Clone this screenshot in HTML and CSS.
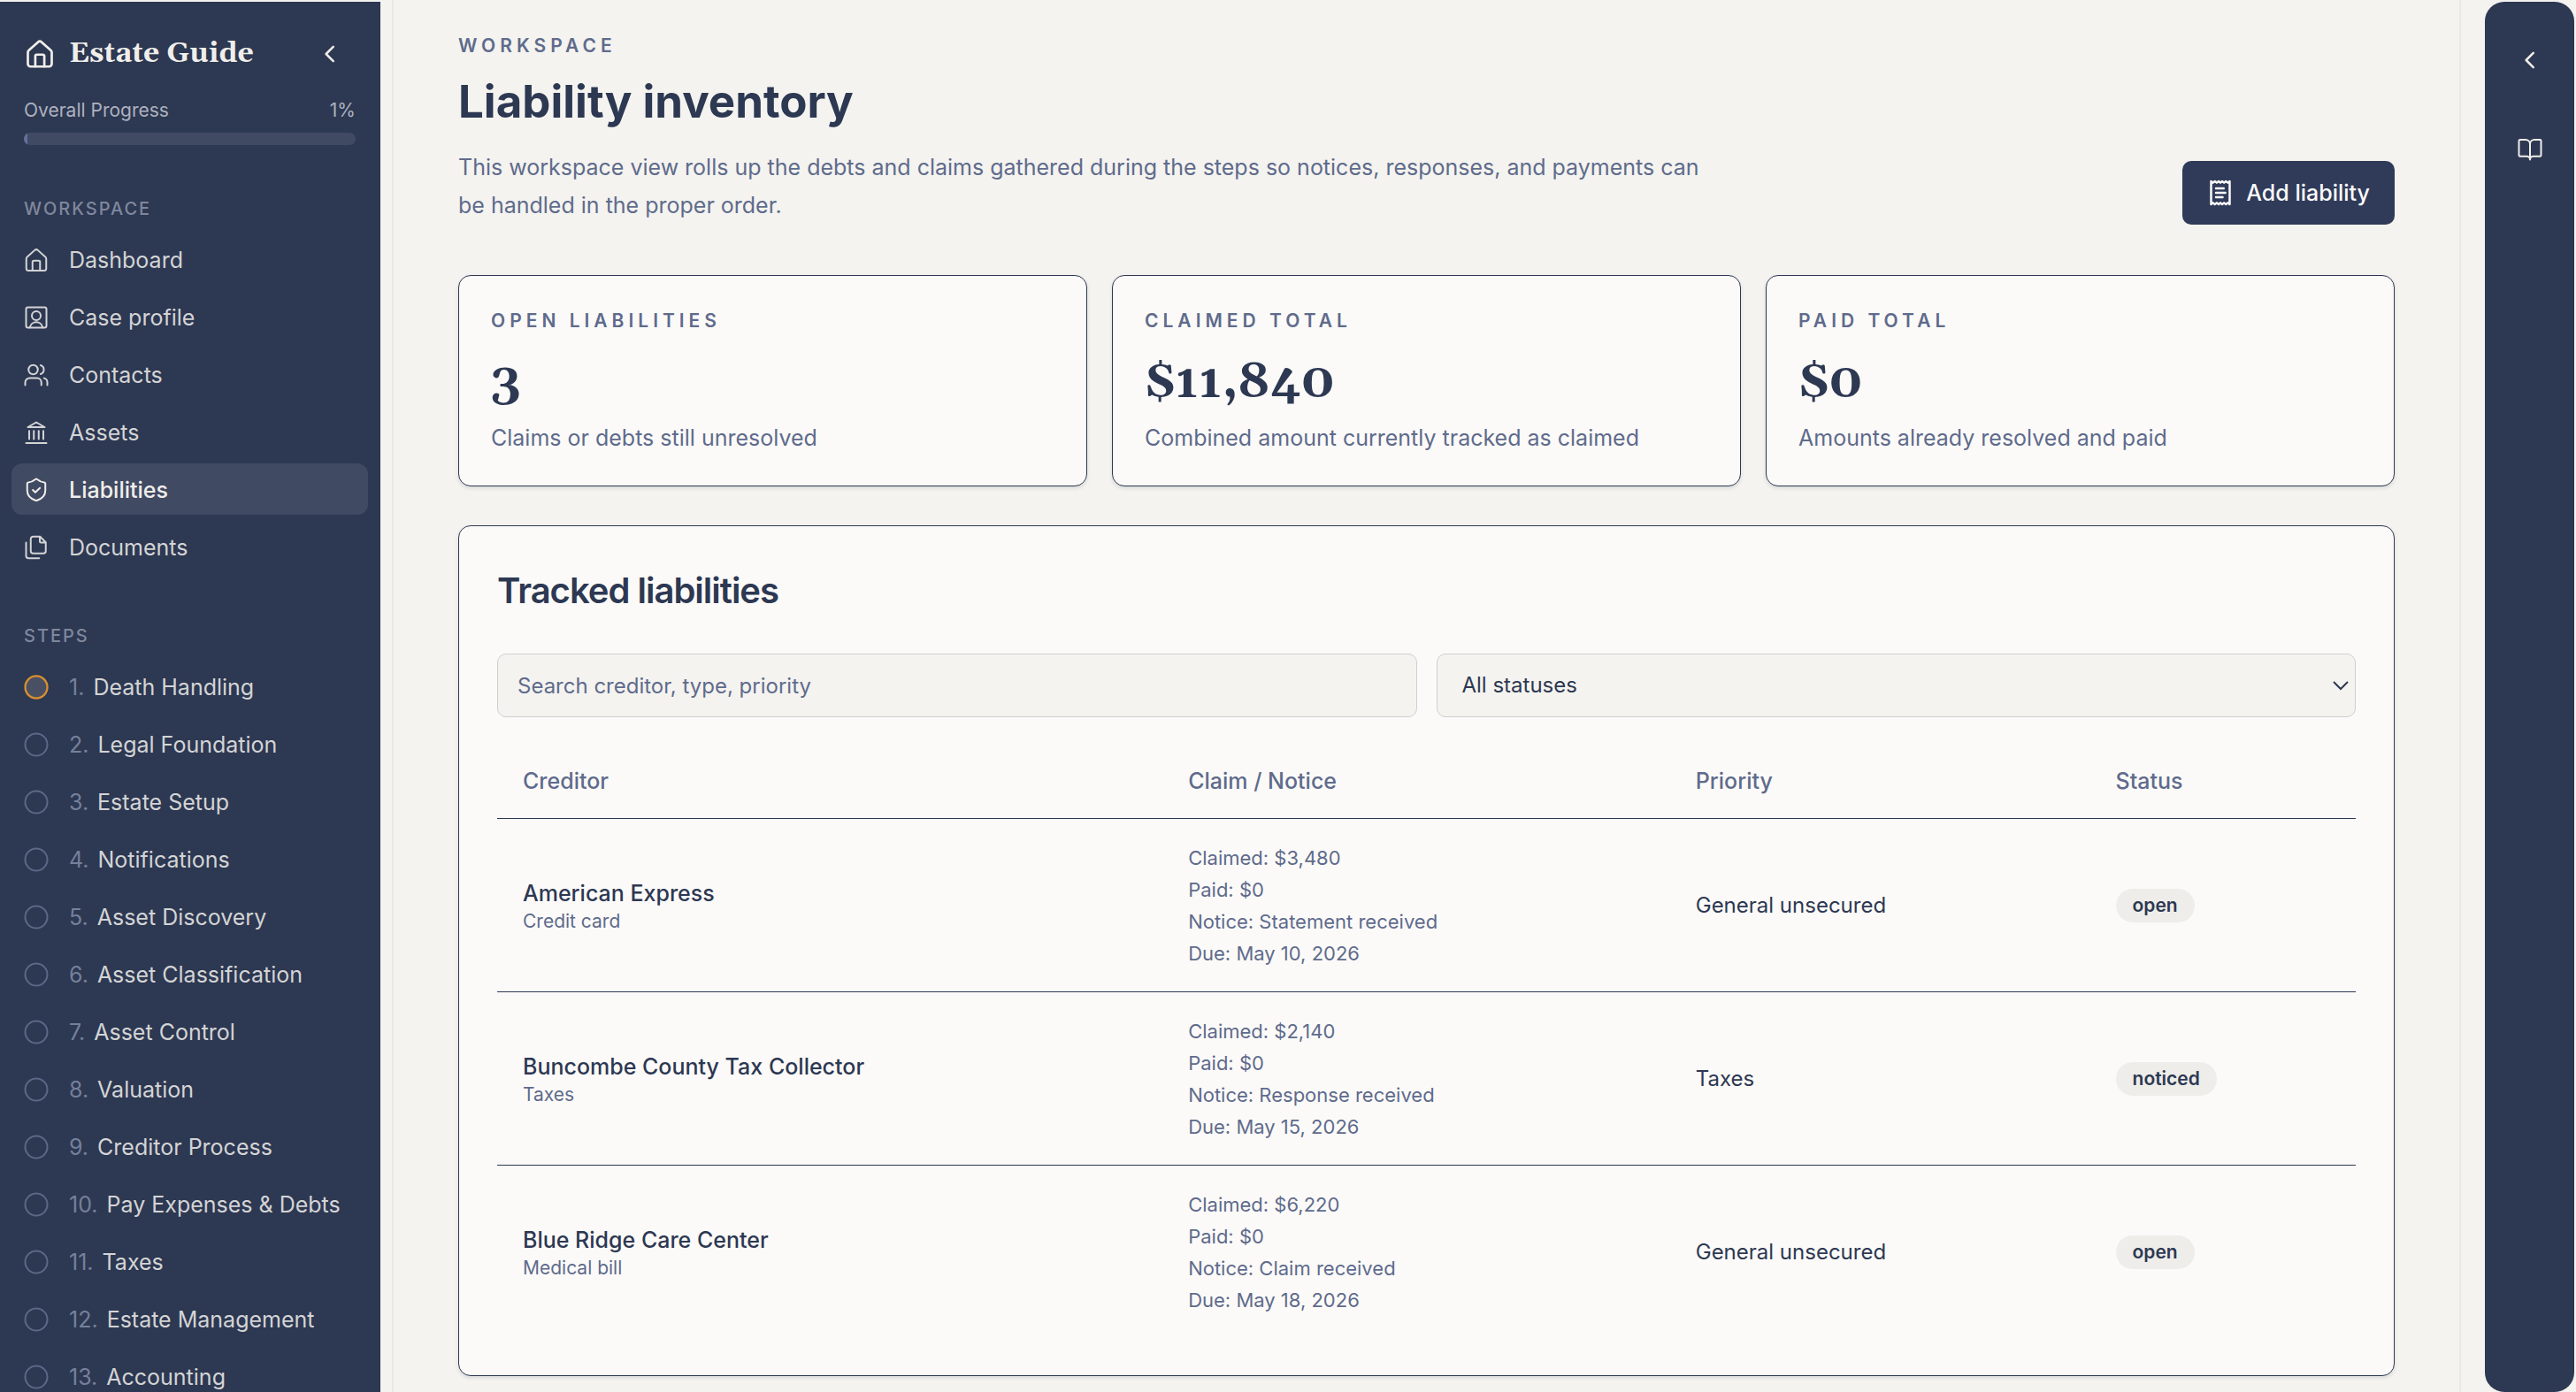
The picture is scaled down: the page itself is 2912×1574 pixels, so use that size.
FILE: index.html
```html
<!DOCTYPE html>
<html lang="en">
<head>
<meta charset="utf-8">
<meta name="viewport" content="width=device-width, initial-scale=1">
<title>Liability inventory – Estate Guide</title>
<link rel="stylesheet" href="styles.css">
</head>
<body>
<svg class="sprite" aria-hidden="true">
  <symbol id="home" viewBox="0 0 24 24"><path d="M3 10.9a2.2 2.2 0 0 1 .8-1.7l6.8-6.1a2.1 2.1 0 0 1 2.8 0l6.8 6.1a2.2 2.2 0 0 1 .8 1.7V19.5a2 2 0 0 1-2 2H5a2 2 0 0 1-2-2z"/><path d="M8.6 21.5v-7.8a1.2 1.2 0 0 1 1.2-1.2h4.4a1.2 1.2 0 0 1 1.2 1.2v7.8"/></symbol>
  <symbol id="profile" viewBox="0 0 24 24"><rect x="2.8" y="2.8" width="18.4" height="18.4" rx="1.6"/><circle cx="12" cy="10.4" r="4"/><path d="M6.2 21a5.9 5.9 0 0 1 11.6 0"/></symbol>
  <symbol id="contacts" viewBox="0 0 24 24"><circle cx="9.2" cy="7.2" r="4.2"/><path d="M2 21.2v-2.4a4 4 0 0 1 4-4h6.600a4 4 0 0 1 4 4v2.400M15.900 3.200a4.200 4.200 0 0 1 0 8M19 14.900a4 4 0 0 1 3 3.900v2.400"/></symbol>
  <symbol id="bank" viewBox="0 0 24 24"><path d="M2.800 21.600h18.400M5.600 18V10.600M9.800 18V10.600M14.200 18V10.600M18.400 18V10.600M4.400 7.200h15.200L12 2.800z"/></symbol>
  <symbol id="shield" viewBox="0 0 24 24"><path d="M20.200 12.400c0 5.200-3.600 7.800-7.800 9.200a1.200 1.200 0 0 1-.8 0c-4.200-1.400-7.800-4-7.800-9.200V6.200a1.100 1.100 0 0 1 1-1.100c2.200 0 4.600-1.200 6.400-2.700a1.200 1.200 0 0 1 1.600 0c1.800 1.500 4.200 2.700 6.400 2.700a1.100 1.100 0 0 1 1 1.100z"/><path d="m8.900 12 2.200 2.200 4.200-4"/></symbol>
  <symbol id="documents" viewBox="0 0 24 24"><path d="M15.400 2.200H9.200a2.200 2.200 0 0 0-2.200 2.200v10.800a2.200 2.200 0 0 0 2.200 2.200h9.200a2.200 2.200 0 0 0 2.200-2.200V7.400zM15.200 2.400v4a1.200 1.200 0 0 0 1.200 1.200h4M2.800 7.600v12a2.200 2.200 0 0 0 2.200 2.200h9.600"/></symbol>
  <symbol id="step" viewBox="0 0 24 24"><circle cx="12" cy="12" r="10"/></symbol>
  <symbol id="chevron-left" viewBox="0 0 24 24"><path d="m15 5.500-6.500 6.500 6.500 6.500"/></symbol>
  <symbol id="book" viewBox="0 0 24 24"><path d="M12 7v14.200M3 18.200a1 1 0 0 1-1-1V4.200a1 1 0 0 1 1-1h5a4 4 0 0 1 4 4 4 4 0 0 1 4-4h5a1 1 0 0 1 1 1v13a1 1 0 0 1-1 1h-6a3 3 0 0 0-3 3 3 3 0 0 0-3-3z"/></symbol>
  <symbol id="receipt" viewBox="0 0 24 24"><path d="M3.600 1.600l1.700 1.300 1.700-1.300 1.700 1.300 1.700-1.300L12 2.900l1.600-1.300 1.700 1.300L17 1.600l1.700 1.300 1.700-1.300v20.800l-1.700-1.300-1.700 1.300-1.700-1.300-1.700 1.300-1.600-1.300-1.600 1.300-1.700-1.300L7 22.400l-1.700-1.300-1.700 1.300zM8 8h7M8 12h8.500M8 16h6"/></symbol>
</svg>

<div class="app">
  <aside class="sidebar">
    <div class="brand">
      <svg class="icon brand-icon" aria-hidden="true"><use href="#home"/></svg>
      <span class="brand-name">Estate Guide</span>
      <button class="icon-button" type="button" aria-label="Collapse sidebar"><svg class="icon" aria-hidden="true"><use href="#chevron-left"/></svg></button>
    </div>
    <div class="progress">
      <div class="progress-text"><span id="progress-label">Overall Progress</span><span>1%</span></div>
      <div class="progress-track" role="progressbar" aria-labelledby="progress-label" aria-valuenow="1" aria-valuemin="0" aria-valuemax="100"><div class="progress-fill" style="width: 1%"></div></div>
    </div>

    <nav class="nav" aria-labelledby="nav-workspace">
      <h2 class="nav-title" id="nav-workspace">WORKSPACE</h2>
      <a class="nav-link" href="#"><svg class="icon" aria-hidden="true"><use href="#home"/></svg>Dashboard</a>
      <a class="nav-link" href="#"><svg class="icon" aria-hidden="true"><use href="#profile"/></svg>Case profile</a>
      <a class="nav-link" href="#"><svg class="icon" aria-hidden="true"><use href="#contacts"/></svg>Contacts</a>
      <a class="nav-link" href="#"><svg class="icon" aria-hidden="true"><use href="#bank"/></svg>Assets</a>
      <a class="nav-link active" href="#" aria-current="page"><svg class="icon" aria-hidden="true"><use href="#shield"/></svg>Liabilities</a>
      <a class="nav-link" href="#"><svg class="icon" aria-hidden="true"><use href="#documents"/></svg>Documents</a>
    </nav>

    <nav class="nav" aria-labelledby="nav-steps">
      <h2 class="nav-title" id="nav-steps">STEPS</h2>
      <a class="nav-link step current" href="#"><svg class="icon" aria-hidden="true"><use href="#step"/></svg><span><span class="num">1.</span>Death Handling</span></a>
      <a class="nav-link step" href="#"><svg class="icon" aria-hidden="true"><use href="#step"/></svg><span><span class="num">2.</span>Legal Foundation</span></a>
      <a class="nav-link step" href="#"><svg class="icon" aria-hidden="true"><use href="#step"/></svg><span><span class="num">3.</span>Estate Setup</span></a>
      <a class="nav-link step" href="#"><svg class="icon" aria-hidden="true"><use href="#step"/></svg><span><span class="num">4.</span>Notifications</span></a>
      <a class="nav-link step" href="#"><svg class="icon" aria-hidden="true"><use href="#step"/></svg><span><span class="num">5.</span>Asset Discovery</span></a>
      <a class="nav-link step" href="#"><svg class="icon" aria-hidden="true"><use href="#step"/></svg><span><span class="num">6.</span>Asset Classification</span></a>
      <a class="nav-link step" href="#"><svg class="icon" aria-hidden="true"><use href="#step"/></svg><span><span class="num">7.</span>Asset Control</span></a>
      <a class="nav-link step" href="#"><svg class="icon" aria-hidden="true"><use href="#step"/></svg><span><span class="num">8.</span>Valuation</span></a>
      <a class="nav-link step" href="#"><svg class="icon" aria-hidden="true"><use href="#step"/></svg><span><span class="num">9.</span>Creditor Process</span></a>
      <a class="nav-link step" href="#"><svg class="icon" aria-hidden="true"><use href="#step"/></svg><span><span class="num">10.</span>Pay Expenses &amp; Debts</span></a>
      <a class="nav-link step" href="#"><svg class="icon" aria-hidden="true"><use href="#step"/></svg><span><span class="num">11.</span>Taxes</span></a>
      <a class="nav-link step" href="#"><svg class="icon" aria-hidden="true"><use href="#step"/></svg><span><span class="num">12.</span>Estate Management</span></a>
      <a class="nav-link step" href="#"><svg class="icon" aria-hidden="true"><use href="#step"/></svg><span><span class="num">13.</span>Accounting</span></a>
    </nav>
  </aside>

  <main class="main">
    <header class="page-header">
      <div>
        <p class="eyebrow">WORKSPACE</p>
        <h1 class="page-title">Liability inventory</h1>
        <p class="lead">This workspace view rolls up the debts and claims gathered during the steps so notices, responses, and payments can be handled in the proper order.</p>
      </div>
      <button class="primary-button" type="button"><svg class="icon" aria-hidden="true"><use href="#receipt"/></svg>Add liability</button>
    </header>

    <section class="metrics" aria-label="Summary">
      <article class="card metric">
        <h2 class="metric-label">OPEN LIABILITIES</h2>
        <p class="metric-value">3</p>
        <p class="metric-note">Claims or debts still unresolved</p>
      </article>
      <article class="card metric">
        <h2 class="metric-label">CLAIMED TOTAL</h2>
        <p class="metric-value">$11,840</p>
        <p class="metric-note">Combined amount currently tracked as claimed</p>
      </article>
      <article class="card metric">
        <h2 class="metric-label">PAID TOTAL</h2>
        <p class="metric-value">$0</p>
        <p class="metric-note">Amounts already resolved and paid</p>
      </article>
    </section>

    <section class="card tracked" aria-labelledby="tracked-title">
      <h2 class="section-title" id="tracked-title">Tracked liabilities</h2>
      <form class="filters">
        <input class="field" type="search" aria-label="Search liabilities" placeholder="Search creditor, type, priority">
        <select class="field select" aria-label="Status"><option>All statuses</option><option>open</option><option>noticed</option></select>
      </form>
      <table class="table">
        <colgroup><col class="col-creditor"><col class="col-claim"><col class="col-priority"><col class="col-status"></colgroup>
        <thead>
          <tr><th scope="col">Creditor</th><th scope="col">Claim / Notice</th><th scope="col">Priority</th><th scope="col">Status</th></tr>
        </thead>
        <tbody>
          <tr>
            <td><div class="name">American Express</div><div class="kind">Credit card</div></td>
            <td class="claim"><div>Claimed: $3,480</div><div>Paid: $0</div><div>Notice: Statement received</div><div>Due: May 10, 2026</div></td>
            <td>General unsecured</td>
            <td><span class="badge">open</span></td>
          </tr>
          <tr>
            <td><div class="name">Buncombe County Tax Collector</div><div class="kind">Taxes</div></td>
            <td class="claim"><div>Claimed: $2,140</div><div>Paid: $0</div><div>Notice: Response received</div><div>Due: May 15, 2026</div></td>
            <td>Taxes</td>
            <td><span class="badge">noticed</span></td>
          </tr>
          <tr>
            <td><div class="name">Blue Ridge Care Center</div><div class="kind">Medical bill</div></td>
            <td class="claim"><div>Claimed: $6,220</div><div>Paid: $0</div><div>Notice: Claim received</div><div>Due: May 18, 2026</div></td>
            <td>General unsecured</td>
            <td><span class="badge">open</span></td>
          </tr>
        </tbody>
      </table>
    </section>
  </main>

  <aside class="rail" aria-label="Reference panel">
    <button class="icon-button" type="button" aria-label="Expand panel"><svg class="icon" aria-hidden="true"><use href="#chevron-left"/></svg></button>
    <button class="icon-button" type="button" aria-label="Guide"><svg class="icon book" aria-hidden="true"><use href="#book"/></svg></button>
  </aside>
</div>
</body>
</html>
```
FILE: styles.css
```css
:root {
  --navy: #2d3852;
  --navy-strong: #303b5a;
  --navy-raised: #414a63;
  --muted: #5f6b8c;
  --page: #f4f3ef;
  --card: #fbfaf8;
  --line: #e9e8e4;
  --cream: #f0eeea;
  --serif: Gelasio, Georgia, "Liberation Serif", serif;
}

*,
*::before,
*::after {
  box-sizing: border-box;
}

body {
  margin: 0;
  background: var(--page);
  color: var(--navy);
  font: 400 24px/36px Inter, "Liberation Sans", sans-serif;
}

h1,
h2,
p {
  margin: 0;
}

button,
input,
select {
  font: inherit;
}

.sprite {
  display: none;
}

.app {
  display: flex;
  height: 100vh;
  padding: 2px 2px 0 0;
  overflow: hidden;
}

.icon {
  flex: none;
  width: 30px;
  height: 30px;
  fill: none;
  stroke: currentColor;
  stroke-width: 1.6;
  stroke-linecap: round;
  stroke-linejoin: round;
}

.icon-button {
  display: flex;
  align-items: center;
  justify-content: center;
  width: 58px;
  height: 44px;
  padding: 0;
  border: 0;
  background: none;
  color: var(--cream);
}

.icon-button .icon {
  stroke-width: 2;
}

.icon-button .book {
  stroke-width: 1.6;
}

/* Sidebar */

.sidebar {
  flex: none;
  width: 430px;
  padding: 37px 14px 0 13px;
  overflow: hidden;
  background: var(--navy);
}

.brand {
  display: flex;
  align-items: center;
  gap: 15px;
  padding-left: 14px;
  color: var(--cream);
}

.brand-icon {
  width: 36px;
  height: 36px;
  stroke-width: 1.8;
}

.brand-name {
  flex: 1;
  font: 700 32px/44px var(--serif);
}

.brand .icon-button {
  margin-right: 14px;
}

.progress {
  margin-top: 28px;
  padding: 0 14px;
}

.progress-text {
  display: flex;
  justify-content: space-between;
  color: #adb2bf;
  font-size: 21px;
  line-height: 28px;
}

.progress-track {
  height: 14px;
  margin-top: 11px;
  overflow: hidden;
  border-radius: 7px;
  background: var(--navy-raised);
}

.progress-fill {
  height: 100%;
  background: #64709a;
}

.nav {
  display: flex;
  flex-direction: column;
  gap: 7px;
  margin-top: 58px;
}

.nav-title {
  padding: 0 14px;
  margin-bottom: 7px;
  color: #7f879d;
  font-size: 20px;
  font-weight: 500;
  line-height: 28px;
  letter-spacing: 2px;
}

.nav-link {
  display: flex;
  align-items: center;
  gap: 22px;
  height: 58px;
  padding: 1px 13px 0;
  border-radius: 12px;
  color: #d3d4d5;
  font-size: 25px;
  text-decoration: none;
  white-space: nowrap;
}

.nav-link.active {
  background: var(--navy-raised);
  color: var(--cream);
  font-weight: 500;
}

.step .icon {
  stroke: #5d6888;
}

.step.current .icon {
  fill: #4a5064;
  stroke: #d9902f;
  stroke-width: 1.8;
}

.num {
  margin-right: 10px;
  color: #75809b;
}

/* Main column */

.main {
  flex: 1;
  min-width: 0;
  margin: -2px 27px 0 13px;
  padding: 38px 73px 18px;
  overflow: hidden;
  border: solid var(--line);
  border-width: 0 2px;
}

.page-header {
  display: flex;
  align-items: flex-end;
  justify-content: space-between;
  gap: 44px;
  margin-bottom: 57px;
}

.eyebrow,
.metric-label {
  color: var(--muted);
  font-size: 21px;
  font-weight: 600;
  line-height: 28px;
  letter-spacing: 5px;
}

.page-title {
  margin: 19px 0 23px;
  font-size: 51px;
  font-weight: 700;
  line-height: 60px;
}

.lead {
  max-width: 1420px;
  color: var(--muted);
  font-size: 25px;
  line-height: 43px;
}

.primary-button {
  display: flex;
  flex: none;
  align-items: center;
  gap: 14px;
  height: 72px;
  padding: 0 28px;
  border: 0;
  border-radius: 10px;
  background: var(--navy-strong);
  color: #fbfaf8;
  font-size: 25px;
  font-weight: 500;
}

.primary-button .icon {
  stroke-width: 2;
}

.card {
  border: 1px solid var(--navy);
  border-radius: 14px;
  background: var(--card);
  box-shadow: 0 2px 4px rgba(45, 56, 82, 0.14);
}

.metrics {
  display: grid;
  grid-template-columns: repeat(3, 1fr);
  gap: 28px;
  margin-bottom: 44px;
}

.metric {
  padding: 37px 36px 36px;
}

.metric-value {
  margin: 23px 0 12px;
  font: 700 54px/65px var(--serif);
}

.metric-note {
  color: var(--muted);
  font-size: 25px;
}

.tracked {
  padding: 43px 43px 42px;
}

.section-title {
  font-size: 40px;
  font-weight: 600;
  line-height: 60px;
  letter-spacing: -1px;
}

.filters {
  display: grid;
  grid-template-columns: 1fr 1fr;
  gap: 22px;
  margin: 41px 0 30px;
}

.field {
  width: 100%;
  height: 72px;
  padding: 0 22px;
  border: 1px solid #cfcfcf;
  border-radius: 10px;
  background-color: var(--page);
  color: var(--navy);
  appearance: none;
}

.field::placeholder {
  color: var(--muted);
  opacity: 1;
}

.select {
  padding: 0 28px;
  background-image: url("data:image/svg+xml,%3Csvg xmlns='http://www.w3.org/2000/svg' viewBox='0 0 20 12' fill='none' stroke='%232d3852' stroke-width='2'%3E%3Cpath d='M2 2l8 8 8-8'/%3E%3C/svg%3E");
  background-repeat: no-repeat;
  background-position: right 6px center;
  background-size: 20px 12px;
}

.table {
  width: 100%;
  border-collapse: separate;
  border-spacing: 0;
  table-layout: fixed;
}

.col-creditor { width: 35.8%; }
.col-claim { width: 27.3%; }
.col-priority { width: 22.6%; }
.col-status { width: 14.3%; }

.table th,
.table td {
  border-bottom: 1px solid var(--navy);
  text-align: left;
  vertical-align: middle;
}

.table th {
  padding: 24px 29px;
  color: var(--muted);
  font-size: 25px;
  font-weight: 500;
}

.table td {
  padding: 26px 29px 25px;
}

.table tbody tr:last-child td {
  border-bottom: 0;
}

.name {
  font-size: 25px;
  font-weight: 500;
}

.kind {
  color: var(--muted);
  font-size: 21px;
  line-height: 28px;
}

.table .claim {
  color: var(--muted);
  font-size: 22px;
}

.badge {
  display: inline-block;
  padding: 0 19px;
  border-radius: 19px;
  background: #eeede9;
  font-size: 21px;
  font-weight: 600;
  line-height: 38px;
}

/* Right rail */

.rail {
  display: flex;
  flex: none;
  flex-direction: column;
  align-items: center;
  gap: 57px;
  width: 101px;
  padding-top: 44px;
  border-radius: 22px;
  background: var(--navy);
}
```
